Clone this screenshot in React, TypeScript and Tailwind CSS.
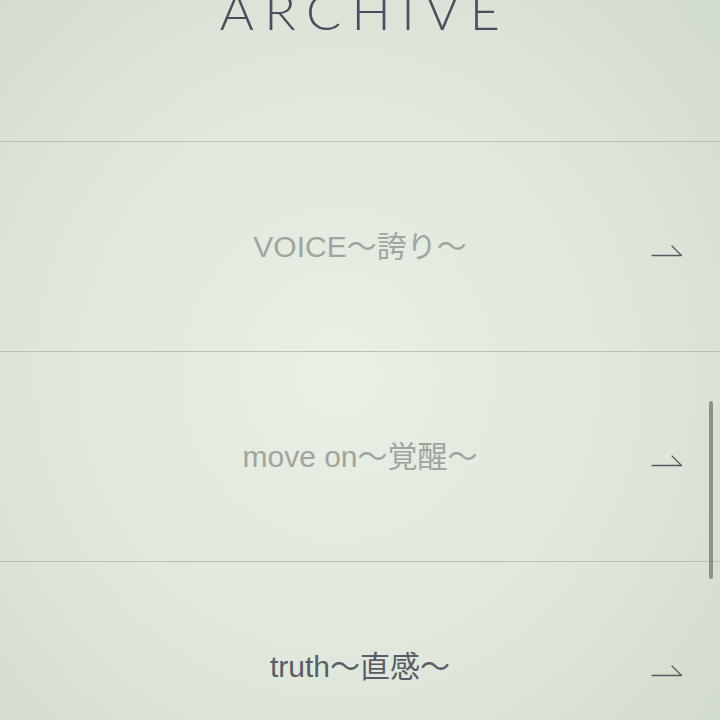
import { ReactNode } from "react";

const items = [
  { title: "VOICE〜誇り〜", faded: true },
  { title: "move on〜覚醒〜", faded: true },
  { title: "truth〜直感〜", faded: false },
];

function Arrow() {
  return (
    <svg width="32" height="14" viewBox="0 0 32 14" fill="none" className="text-[#55585f]">
      <path d="M1 12.5H30.5L21 3" stroke="currentColor" strokeWidth="1.3" strokeLinecap="round" strokeLinejoin="round" />
    </svg>
  );
}

function Row({ children, faded }: { children: ReactNode; faded: boolean }) {
  return (
    <div className="h-[210px] border-t border-[#b9c3b5] flex items-center relative">
      <div
        className={`flex-1 text-center text-[30px] leading-none ${
          faded ? "text-[#a1a5a0]" : "text-[#5a5d68]"
        }`}
      >
        {children}
      </div>
      <div className="absolute right-[37px] top-[101px]">
        <Arrow />
      </div>
    </div>
  );
}

export default function App() {
  return (
    <div
      className="relative w-[720px] h-[720px] overflow-hidden bg-[radial-gradient(ellipse_70%_75%_at_47%_52%,#e9f0e6_0%,#dfe8db_55%,#d2dccc_100%)]"
      style={{ fontFamily: '"Liberation Sans", "Noto Sans CJK JP", sans-serif' }}
    >
      <header className="h-[141px] flex justify-center">
        <h1
          className="-mt-[16px] pl-[10px] text-[52px] leading-none tracking-[0.2em] font-light text-[#4b4e5e]"
          style={{ fontFamily: 'Lato, "Liberation Sans", sans-serif' }}
        >
          ARCHIVE
        </h1>
      </header>
      {items.map((it) => (
        <Row key={it.title} faded={it.faded}>
          {it.title}
        </Row>
      ))}
      <div className="absolute right-[7px] top-[401px] w-[4px] h-[178px] rounded-full bg-[#8d918b]" />
    </div>
  );
}
